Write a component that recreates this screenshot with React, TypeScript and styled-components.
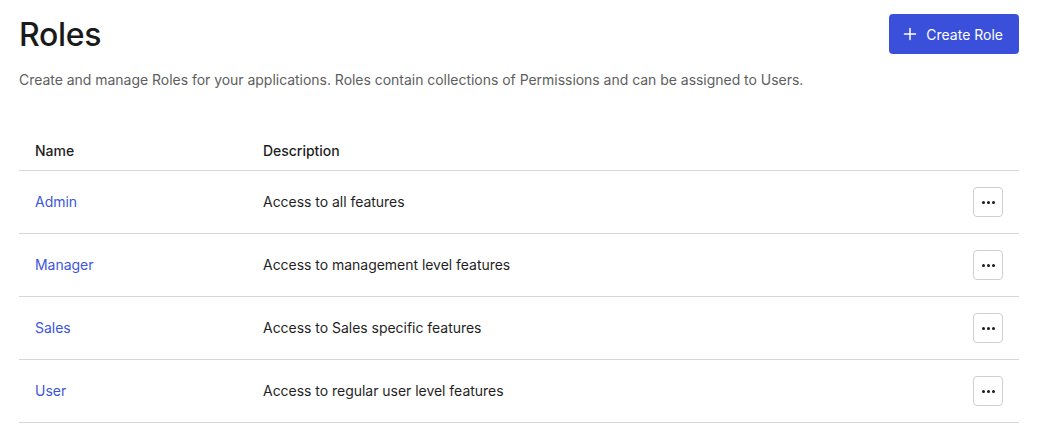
import React from "react";
import styled, { createGlobalStyle } from "styled-components";

const Global = createGlobalStyle`
  html, body { margin: 0; padding: 0; background: #fff; }
  body { font-family: Inter, "Noto Sans", sans-serif; color: #1f1f1f; }
`;

const Page = styled.div`
  padding: 14px 21px 0 19px;
  width: 1040px;
  box-sizing: border-box;
`;

const HeaderBar = styled.div`
  display: flex;
  justify-content: space-between;
  align-items: center;
`;

const Title = styled.h1`
  margin: 0;
  font-size: 32px;
  font-weight: 500;
  letter-spacing: -0.3px;
  color: #1a1a1a;
`;

const PrimaryButton = styled.button`
  display: flex;
  align-items: center;
  gap: 9px;
  height: 40px;
  padding: 0 16px 0 14px;
  border: none;
  border-radius: 4px;
  background: #3a50db;
  color: #fff;
  font-family: inherit;
  font-size: 14px;
  font-weight: 400;
`;

const Subtitle = styled.p`
  margin: 17px 0 0;
  font-size: 14px;
  line-height: 18px;
  letter-spacing: -0.03px;
  color: #5e5e5e;
`;

const Table = styled.table`
  margin-top: 43px;
  width: 100%;
  border-collapse: collapse;
  font-size: 14px;
  letter-spacing: -0.03px;
`;

const Th = styled.th<{ $width?: string }>`
  text-align: left;
  font-weight: 500;
  height: 36px;
  padding: 0 16px 2px;
  width: ${(p) => p.$width ?? "auto"};
  border-bottom: 1px solid #d6d6d6;
  color: #1f1f1f;
`;

const Td = styled.td<{ $width?: string; $action?: boolean }>`
  height: ${(p) => (p.$action ? "62px" : "60px")};
  padding: ${(p) => (p.$action ? "0 16px" : "0 16px 2px")};
  border-bottom: 1px solid #d6d6d6;
  width: ${(p) => p.$width ?? "auto"};
  text-align: ${(p) => (p.$action ? "right" : "left")};
  color: #1f1f1f;
`;

const RoleLink = styled.a`
  color: #3d55de;
  text-decoration: none;
`;

const MoreButton = styled.button`
  width: 30px;
  height: 30px;
  display: inline-flex;
  align-items: center;
  justify-content: center;
  gap: 2px;
  padding: 0;
  border: 1px solid #cfcfcf;
  border-radius: 4px;
  background: #fff;
  vertical-align: middle;
`;

const Dot = styled.span`
  width: 3px;
  height: 3px;
  border-radius: 50%;
  background: #1a1a1a;
`;

const roles = [
  { name: "Admin", desc: "Access to all features" },
  { name: "Manager", desc: "Access to management level features" },
  { name: "Sales", desc: "Access to Sales specific features" },
  { name: "User", desc: "Access to regular user level features" },
];

export default function App() {
  return (
    <>
      <Global />
      <Page>
        <HeaderBar>
          <Title>Roles</Title>
          <PrimaryButton>
            <svg width="14" height="14" viewBox="0 0 14 14" fill="none" stroke="#fff" strokeWidth="1.5" strokeLinecap="round">
              <path d="M7 1.5v11M1.5 7h11" />
            </svg>
            Create Role
          </PrimaryButton>
        </HeaderBar>
        <Subtitle>
          Create and manage Roles for your applications. Roles contain collections of Permissions and can be assigned to Users.
        </Subtitle>
        <Table>
          <thead>
            <tr>
              <Th $width="196px">Name</Th>
              <Th>Description</Th>
              <Th />
            </tr>
          </thead>
          <tbody>
            {roles.map((r) => (
              <tr key={r.name}>
                <Td $width="196px">
                  <RoleLink href="#">{r.name}</RoleLink>
                </Td>
                <Td>{r.desc}</Td>
                <Td $action $width="62px">
                  <MoreButton aria-label="More">
                    <Dot />
                    <Dot />
                    <Dot />
                  </MoreButton>
                </Td>
              </tr>
            ))}
          </tbody>
        </Table>
      </Page>
    </>
  );
}
